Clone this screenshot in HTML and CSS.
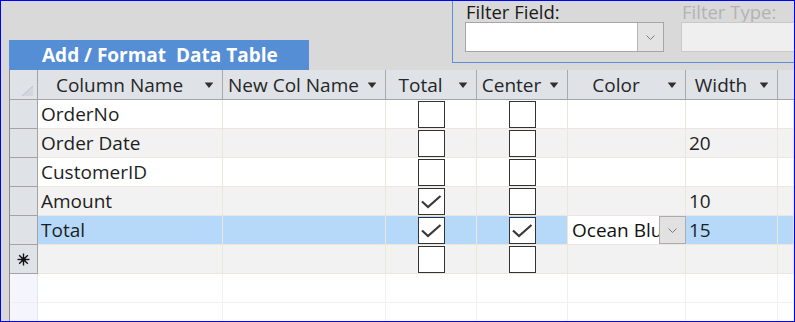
FILE: index.html
```html
<!DOCTYPE html>
<html lang="en">
<head>
    <meta charset="UTF-8">
    <title>Add / Format Data Table</title>
    <link rel="stylesheet" href="styles.css">
</head>
<body>
    <div class="window">
        <div class="top">
            <div class="tab">Add / Format&nbsp; Data Table</div>
            <div class="filter-panel">
                <div class="filter-group">
                    <label>Filter Field:</label>
                    <div class="combo">
                        <div class="combo-text"></div>
                        <div class="combo-btn">
                            <svg width="9" height="5" viewBox="0 0 9 5"><polyline points="0.5,0.5 4.5,4.5 8.5,0.5" fill="none" stroke="#7c7c7c" stroke-width="1"/></svg>
                        </div>
                    </div>
                </div>
                <div class="filter-group disabled">
                    <label>Filter Type:</label>
                    <div class="combo combo-off"></div>
                </div>
            </div>
        </div>

        <div class="sheet">
            <!-- header -->
            <div class="row head">
                <div class="sel corner">
                    <svg width="11" height="10" viewBox="0 0 11 10"><polygon points="11,0 11,10 0,10" fill="#d3d7dd"/><line x1="11" y1="0" x2="0" y2="10" stroke="#bcc1c8" stroke-width="1"/></svg>
                </div>
                <div class="hcell"><span class="htext">Column Name</span><span class="harrow"></span></div>
                <div class="hcell"><span class="htext">New Col Name</span><span class="harrow"></span></div>
                <div class="hcell"><span class="htext">Total</span><span class="harrow"></span></div>
                <div class="hcell"><span class="htext">Center</span><span class="harrow"></span></div>
                <div class="hcell"><span class="htext">Color</span><span class="harrow"></span></div>
                <div class="hcell"><span class="htext">Width</span><span class="harrow"></span></div>
                <div class="hcell last"></div>
            </div>

            <div class="row">
                <div class="sel"></div>
                <div class="cell">OrderNo</div>
                <div class="cell"></div>
                <div class="cell mid"><span class="chk"></span></div>
                <div class="cell mid"><span class="chk"></span></div>
                <div class="cell"></div>
                <div class="cell"></div>
                <div class="cell"></div>
            </div>

            <div class="row alt">
                <div class="sel"></div>
                <div class="cell">Order Date</div>
                <div class="cell"></div>
                <div class="cell mid"><span class="chk"></span></div>
                <div class="cell mid"><span class="chk"></span></div>
                <div class="cell"></div>
                <div class="cell">20</div>
                <div class="cell"></div>
            </div>

            <div class="row">
                <div class="sel"></div>
                <div class="cell">CustomerID</div>
                <div class="cell"></div>
                <div class="cell mid"><span class="chk"></span></div>
                <div class="cell mid"><span class="chk"></span></div>
                <div class="cell"></div>
                <div class="cell"></div>
                <div class="cell"></div>
            </div>

            <div class="row alt">
                <div class="sel"></div>
                <div class="cell">Amount</div>
                <div class="cell"></div>
                <div class="cell mid"><span class="chk"><svg class="tick" width="25" height="25" viewBox="0 0 25 25"><polyline points="3,12.5 9,18 21.5,7" fill="none" stroke="#3a3a3a" stroke-width="2.2"/></svg></span></div>
                <div class="cell mid"><span class="chk"></span></div>
                <div class="cell"></div>
                <div class="cell">10</div>
                <div class="cell"></div>
            </div>

            <div class="row current">
                <div class="sel"></div>
                <div class="cell">Total</div>
                <div class="cell"></div>
                <div class="cell mid"><span class="chk"><svg class="tick" width="25" height="25" viewBox="0 0 25 25"><polyline points="3,12.5 9,18 21.5,7" fill="none" stroke="#3a3a3a" stroke-width="2.2"/></svg></span></div>
                <div class="cell mid"><span class="chk"><svg class="tick" width="25" height="25" viewBox="0 0 25 25"><polyline points="3,12.5 9,18 21.5,7" fill="none" stroke="#3a3a3a" stroke-width="2.2"/></svg></span></div>
                <div class="cell combo-cell">
                    <div class="combo-text">Ocean Blue</div>
                    <div class="combo-btn">
                        <svg width="9" height="5" viewBox="0 0 9 5"><polyline points="0.5,0.5 4.5,4.5 8.5,0.5" fill="none" stroke="#7a7a7a" stroke-width="1"/></svg>
                    </div>
                </div>
                <div class="cell">15</div>
                <div class="cell"></div>
            </div>

            <div class="row alt">
                <div class="sel new">
                    <svg width="13" height="13" viewBox="0 0 13 13">
                        <g stroke="#111" stroke-width="1.4">
                            <line x1="6.5" y1="0.5" x2="6.5" y2="12.5"/>
                            <line x1="0.5" y1="6.5" x2="12.5" y2="6.5"/>
                            <line x1="2.2" y1="2.2" x2="10.8" y2="10.8"/>
                            <line x1="10.8" y1="2.2" x2="2.2" y2="10.8"/>
                        </g>
                        <rect x="4.5" y="4.5" width="4" height="4" fill="#111"/>
                    </svg>
                </div>
                <div class="cell"></div>
                <div class="cell"></div>
                <div class="cell mid"><span class="chk"></span></div>
                <div class="cell mid"><span class="chk"></span></div>
                <div class="cell"></div>
                <div class="cell"></div>
                <div class="cell"></div>
            </div>

            <div class="row blank">
                <div class="sel"></div>
                <div class="cell"></div>
                <div class="cell"></div>
                <div class="cell"></div>
                <div class="cell"></div>
                <div class="cell"></div>
                <div class="cell"></div>
                <div class="cell"></div>
            </div>

            <div class="row blank">
                <div class="sel"></div>
                <div class="cell"></div>
                <div class="cell"></div>
                <div class="cell"></div>
                <div class="cell"></div>
                <div class="cell"></div>
                <div class="cell"></div>
                <div class="cell"></div>
            </div>
        </div>
    </div>
</body>
</html>
```

FILE: styles.css
```css
* {
    box-sizing: border-box;
}

body {
    margin: 0;
    font-family: 'Open Sans', 'Noto Sans', sans-serif;
    font-size: 19px;
    color: #1e1e1e;
}

.window {
    width: 795px;
    height: 322px;
    border: 1px solid #0000ff;
    background-color: #d9d9d9;
    overflow: hidden;
}

/* top strip: tab + filter box */
.top {
    display: flex;
    height: 69px;
}

.tab {
    flex-shrink: 0;
    margin: 39px 0 0 8px;
    width: 300px;
    height: 30px;
    padding-left: 33px;
    background-color: #558ed5;
    color: #fff;
    font-weight: bold;
    line-height: 30px;
    white-space: nowrap;
}

.filter-panel {
    flex: 1;
    display: flex;
    gap: 17px;
    height: 62px;
    margin-left: 143px;
    padding-left: 12px;
    border-left: 1px solid #5b8fd6;
    border-bottom: 1px solid #5b8fd6;
}

.filter-group {
    flex-shrink: 0;
    display: flex;
    flex-direction: column;
}

.filter-group label {
    height: 21px;
    font-size: 18.5px;
    line-height: 21px;
    padding-left: 1px;
    color: #1a1a1a;
    white-space: nowrap;
}

.filter-group.disabled label {
    color: #b3b3b3;
}

.combo {
    display: flex;
    width: 199px;
    height: 30px;
    border: 1px solid #a6a6a6;
    background-color: #fff;
}

.combo-off {
    width: 220px;
    border-color: #c9c9c9;
    background-color: #efefef;
}

.combo-text {
    flex: 1;
    overflow: hidden;
    white-space: nowrap;
}

.combo-btn {
    display: flex;
    align-items: center;
    justify-content: center;
    width: 26px;
    border-left: 1px solid #b4b4b4;
    background-color: #e3e3e3;
}

/* datasheet */
.sheet {
    display: grid;
    grid-template-columns: 28px 185px 163px 91px 91px 118px 92px 1fr;
    grid-template-rows: 30px;
    grid-auto-rows: 29px;
    margin-left: 8px;
    border-left: 1px solid #8a8a8a;
}

.row {
    display: contents;
}

.sel {
    display: flex;
    align-items: center;
    justify-content: center;
    background-color: #dfe3e8;
    border-right: 1px solid #a3a3a3;
    border-bottom: 1px solid #a3a3a3;
}

.sel.corner {
    align-items: flex-end;
    justify-content: flex-end;
    padding: 0 4px 3px 0;
}

.hcell {
    display: flex;
    align-items: center;
    background-color: #dfe3e8;
    border-right: 1px solid #aaaaaa;
    border-bottom: 1px solid #a3a3a3;
    color: #262626;
    white-space: nowrap;
}

.hcell.last {
    border-right: none;
}

.htext {
    flex: 1;
    text-align: center;
}

.harrow {
    width: 0;
    height: 0;
    margin: 1px 9px 0 4px;
    border-left: 4px solid transparent;
    border-right: 4px solid transparent;
    border-top: 5px solid #303030;
    box-shadow: 0 -1px 0 #8a8a8a;
}

.cell {
    display: flex;
    align-items: center;
    padding-left: 3px;
    background-color: #fff;
    border-right: 1px solid #ebe7dc;
    border-bottom: 1px solid #ebe7dc;
    overflow: hidden;
    white-space: nowrap;
}

.cell.mid {
    justify-content: center;
    padding-left: 0;
}

.row.alt .cell {
    background-color: #f2f2f2;
}

.row.current .cell {
    background-color: #b6d8f9;
}

.row.blank .sel {
    background-color: #f5f6fd;
    border-right-color: #e6e6ea;
    border-bottom-color: #eeeeee;
}

.row.blank .cell {
    border-right-color: #f2f0ea;
    border-bottom-color: #f0f0f0;
}

.chk {
    display: block;
    width: 27px;
    height: 27px;
    border: 1px solid #333;
    background-color: #fff;
}

.tick {
    display: block;
}

.row.current .combo-cell {
    padding-left: 0;
    border-right: none;
    background-color: #fff;
}

.combo-cell .combo-text {
    padding-left: 4px;
    color: #111;
}

.combo-cell .combo-btn {
    width: 27px;
    height: 100%;
    border: 1px solid #acacac;
    background-color: #e1e1e1;
}
```
